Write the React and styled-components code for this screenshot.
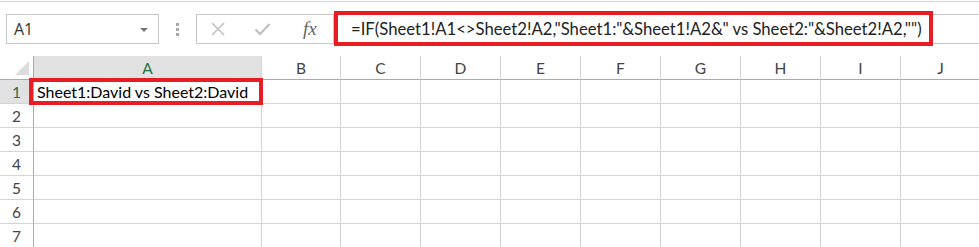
import styled, { createGlobalStyle } from "styled-components";

const GlobalStyle = createGlobalStyle`
  html, body {
    margin : 0;
    padding : 0;
    background : #ffffff;
  }
  body {
    width : 979px;
    height : 247px;
    overflow : hidden;
    font-family : "Lato", "Liberation Sans", sans-serif;
  }
`;

const annotationRed = "#e81c24";

const Sheet = styled.div`
  width : 979px;
  height : 247px;
  overflow : hidden;
  background : #ffffff;
`;

const TopRule = styled.div`
  height : 1px;
  margin-top : 1px;
  background : #d9d9d9;
`;

const FormulaRow = styled.div`
  display : flex;
  align-items : flex-start;
  height : 54px;
  padding : 12px 0 0 6px;
  box-sizing : border-box;
`;

const NameBox = styled.div`
  width : 153px;
  height : 30px;
  box-sizing : border-box;
  border : 1px solid #c6c6c6;
  display : flex;
  align-items : center;
  justify-content : space-between;
  padding : 0 10px 0 7px;
  font-family : "Open Sans", "Liberation Sans", sans-serif;
  font-size : 16px;
  color : #333333;
`;

const DropArrow = styled.span`
  width : 0;
  height : 0;
  border-left : 4px solid transparent;
  border-right : 4px solid transparent;
  border-top : 4px solid #777777;
  margin-top : 2px;
`;

const Grip = styled.div`
  width : 37px;
  height : 30px;
  display : flex;
  flex-direction : column;
  align-items : center;
  justify-content : center;
  gap : 2px;

  span {
    width : 3px;
    height : 3px;
    background : #a8a8a8;
  }
`;

const FunctionBox = styled.div`
  width : 137px;
  height : 30px;
  box-sizing : border-box;
  border : 1px solid #c6c6c6;
  border-right : none;
  display : flex;
  align-items : center;
  padding-left : 13px;
  gap : 28px;
`;

const FxLabel = styled.span`
  font-family : "Liberation Serif", "DejaVu Serif", serif;
  font-style : italic;
  font-size : 19px;
  color : #666666;
  margin-left : 4px;
  line-height : 1;
  margin-top : -2px;
`;

const FormulaBar = styled.div`
  position : relative;
  flex : 1;
  height : 30px;
  box-sizing : border-box;
  border : 1px solid #c6c6c6;
  border-right : none;
  display : flex;
  align-items : center;
  padding-left : 17px;
  font-size : 16.7px;
  color : #222222;
  white-space : nowrap;
`;

const FormulaFrame = styled.div`
  position : absolute;
  left : 0;
  top : -4px;
  width : 599px;
  height : 35px;
  box-sizing : border-box;
  border : 4px solid ${annotationRed};
  pointer-events : none;
`;

const Grid = styled.div`
  display : grid;
  grid-template-columns : 34px 228px 79px repeat(8, 80px);
  grid-auto-rows : 24px;
`;

const Corner = styled.div`
  box-sizing : border-box;
  border-right : 1px solid #ababab;
  border-bottom : 1px solid #ababab;

  svg {
    display : block;
  }
`;

const ColHead = styled.div`
  box-sizing : border-box;
  border-right : 1px solid #d4d4d4;
  border-bottom : 1px solid #ababab;
  background : ${(p) => (p.$selected ? "#e1e1e1" : "#ffffff")};
  color : ${(p) => (p.$selected ? "#217346" : "#444444")};
  display : flex;
  align-items : center;
  justify-content : center;
  font-size : 15.5px;
`;

const RowHead = styled.div`
  box-sizing : border-box;
  border-right : 1px solid #ababab;
  border-bottom : 1px solid #d4d4d4;
  background : ${(p) => (p.$selected ? "#e1e1e1" : "#ffffff")};
  color : ${(p) => (p.$selected ? "#217346" : "#444444")};
  display : flex;
  align-items : center;
  justify-content : center;
  font-size : 15.5px;
`;

const Cell = styled.div`
  position : relative;
  z-index : ${(p) => (p.$framed ? 1 : 0)};
  box-sizing : border-box;
  border-right : 1px solid #d4d4d4;
  border-bottom : 1px solid #d4d4d4;
  display : flex;
  align-items : center;
  padding-left : 3px;
  font-size : 16px;
  color : #000000;
  white-space : nowrap;
`;

const CellFrame = styled.div`
  position : absolute;
  left : -5px;
  right : -2px;
  top : -2px;
  bottom : -2px;
  border : 4px solid ${annotationRed};
  pointer-events : none;
`;

const columns = ["A", "B", "C", "D", "E", "F", "G", "H", "I", "J"];
const rows = [1, 2, 3, 4, 5, 6, 7];

function CancelIcon () {
  return (
    <svg width="16" height="14" viewBox="0 0 16 14">
      <path d="M2 1 L14 13 M14 1 L2 13" stroke="#c2c2c2" strokeWidth="1.6" fill="none" />
    </svg>
  );
}

function EnterIcon () {
  return (
    <svg width="17" height="14" viewBox="0 0 17 14">
      <path d="M1.5 7.5 L6 12 L15.5 2" stroke="#c2c2c2" strokeWidth="2.4" fill="none" />
    </svg>
  );
}

function App () {
  return (
    <Sheet>
      <GlobalStyle />
      <TopRule />
      <FormulaRow>
        <NameBox>
          <span>A1</span>
          <DropArrow />
        </NameBox>
        <Grip>
          <span />
          <span />
          <span />
        </Grip>
        <FunctionBox>
          <CancelIcon />
          <EnterIcon />
          <FxLabel>fx</FxLabel>
        </FunctionBox>
        <FormulaBar>
          {'=IF(Sheet1!A1<>Sheet2!A2,"Sheet1:"&Sheet1!A2&" vs Sheet2:"&Sheet2!A2,"")'}
          <FormulaFrame />
        </FormulaBar>
      </FormulaRow>
      <Grid>
        <Corner>
          <svg width="33" height="23" viewBox="0 0 33 23">
            <polygon points="29,5 29,19 15,19" fill="#dcdcdc" />
          </svg>
        </Corner>
        {columns.map((col) => (
          <ColHead key={col} $selected={col === "A"}>{col}</ColHead>
        ))}
        {rows.map((row) => [
          <RowHead key={`h${row}`} $selected={row === 1}>{row}</RowHead>,
          ...columns.map((col) => (
            <Cell key={`${col}${row}`} $framed={col === "A" && row === 1}>
              {col === "A" && row === 1 && "Sheet1:David vs Sheet2:David"}
              {col === "A" && row === 1 && <CellFrame />}
            </Cell>
          )),
        ])}
      </Grid>
    </Sheet>
  );
}

export default App;
